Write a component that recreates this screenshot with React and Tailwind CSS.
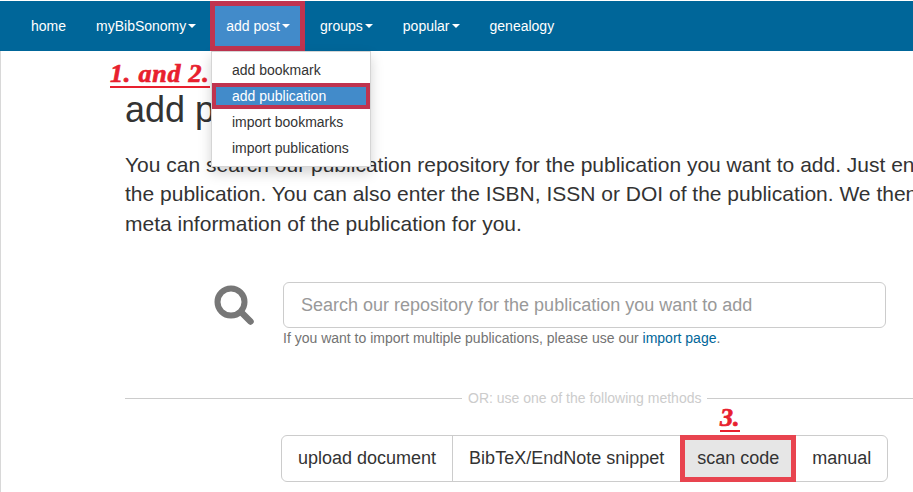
import React from 'react';

const navItems = [
  { label: 'home' },
  { label: 'myBibSonomy', caret: true },
  { label: 'add post', caret: true, active: true },
  { label: 'groups', caret: true },
  { label: 'popular', caret: true },
  { label: 'genealogy' },
];

const menuItems = ['add bookmark', 'add publication', 'import bookmarks', 'import publications'];

const Caret = () => (
  <span className="ml-[2px] inline-block h-0 w-0 border-x-[4px] border-t-[4px] border-x-transparent border-t-white align-middle" />
);

const App = () => {
  return (
    <div className="relative h-[492px] w-[913px] overflow-hidden bg-white font-['Liberation_Sans',Arial,sans-serif] text-[#333333]">
      {/* navbar */}
      <div className="mt-px flex h-[50px] bg-[#006699] pl-4 text-[14px] text-white">
        {navItems.map((item) => (
          <div
            key={item.label}
            className={
              item.active
                ? 'relative z-10 -ml-px flex h-[50px] items-center border-[5px] border-[#c0344f] bg-[#428bca] pl-[11px] pr-[10px]'
                : 'flex h-[50px] items-center px-[15px]'
            }
          >
            {item.label}
            {item.caret && <Caret />}
          </div>
        ))}
      </div>

      {/* dropdown */}
      <div className="absolute left-[211px] top-[51px] z-20 w-[160px] border border-[#d5d5d5] bg-white py-[5px] text-[14px] leading-5 shadow-[0_6px_12px_rgba(0,0,0,0.175)]">
        {menuItems.map((item) =>
          item === 'add publication' ? (
            <div
              key={item}
              className="flex h-[26px] items-center border-[4px] border-[#c0344f] bg-[#428bca] pl-[16px] text-white"
            >
              {item}
            </div>
          ) : (
            <div key={item} className="flex h-[26px] items-center pl-5">
              {item}
            </div>
          )
        )}
      </div>

      {/* annotations */}
      <div className="absolute left-[110px] top-[61px] z-10 w-[100px] border-b-2 border-[#e8202e] font-['Liberation_Serif',serif] text-[26px] font-bold italic leading-[25px] tracking-[0.8px] whitespace-nowrap text-[#e8202e] [-webkit-text-stroke:0.7px_#e8202e]">
        1. and 2.
      </div>
      <div className="absolute left-[720px] top-[405px] z-10 w-5 border-b-2 border-[#e8202e] font-['Liberation_Serif',serif] text-[26px] font-bold italic leading-[25px] whitespace-nowrap text-[#e8202e] [-webkit-text-stroke:0.7px_#e8202e]">
        3.
      </div>

      {/* content */}
      <div className="pl-[125px]">
        <h1 className="mt-[39px] h-[40px] text-[36px] leading-[40px] whitespace-nowrap">add publication</h1>
        <div className="mt-[20px] text-[21px] leading-[29.4px] whitespace-nowrap">
          <p>You can search our publication repository for the publication you want to add. Just enter the title of</p>
          <p>the publication. You can also enter the ISBN, ISSN or DOI of the publication. We then try to find the</p>
          <p>meta information of the publication for you.</p>
        </div>

        <div className="ml-[89px] mt-[44px] flex">
          <svg className="mt-[3px] h-[40px] w-[40px]" viewBox="0 0 40 40" fill="none" stroke="#777777">
            <circle cx="17" cy="17" r="13.5" strokeWidth="6" />
            <path d="M27 27 L36.5 36.5" strokeWidth="6.5" strokeLinecap="round" />
          </svg>
          <div className="ml-[29px] w-[603px]">
            <div className="flex h-[46px] items-center rounded-[6px] border border-[#cccccc] px-[17px] text-[18px] text-[#999999]">
              Search our repository for the publication you want to add
            </div>
            <p className="text-[14px] leading-5 text-[#737373]">
              If you want to import multiple publications, please use our{' '}
              <span className="text-[#006699]">import page</span>.
            </p>
          </div>
        </div>

        <div className="mt-[40px] flex h-5 w-[900px] items-center text-[14px] text-[#cccccc]">
          <div className="h-px w-[337px] bg-[#cccccc]" />
          <span className="px-[6px] whitespace-nowrap">OR: use one of the following methods</span>
          <div className="h-px flex-1 bg-[#cccccc]" />
        </div>

        <div className="ml-[156px] mt-[27px] flex h-[47px] w-[607px] rounded-[6px] border border-[#cccccc] text-[18px]">
          <div className="flex items-center border-r border-[#cccccc] px-4">upload document</div>
          <div className="flex items-center px-4">BibTeX/EndNote snippet</div>
          <div className="-my-px flex items-center border-[5px] border-[#e8444f] bg-[#e6e6e6] px-[12px]">scan code</div>
          <div className="flex items-center pl-[16px]">manual</div>
        </div>
      </div>

      {/* faint page edge */}
      <div className="absolute bottom-0 left-0 top-[51px] w-px bg-[#d8d8d8]" />
    </div>
  );
};

export default App;
